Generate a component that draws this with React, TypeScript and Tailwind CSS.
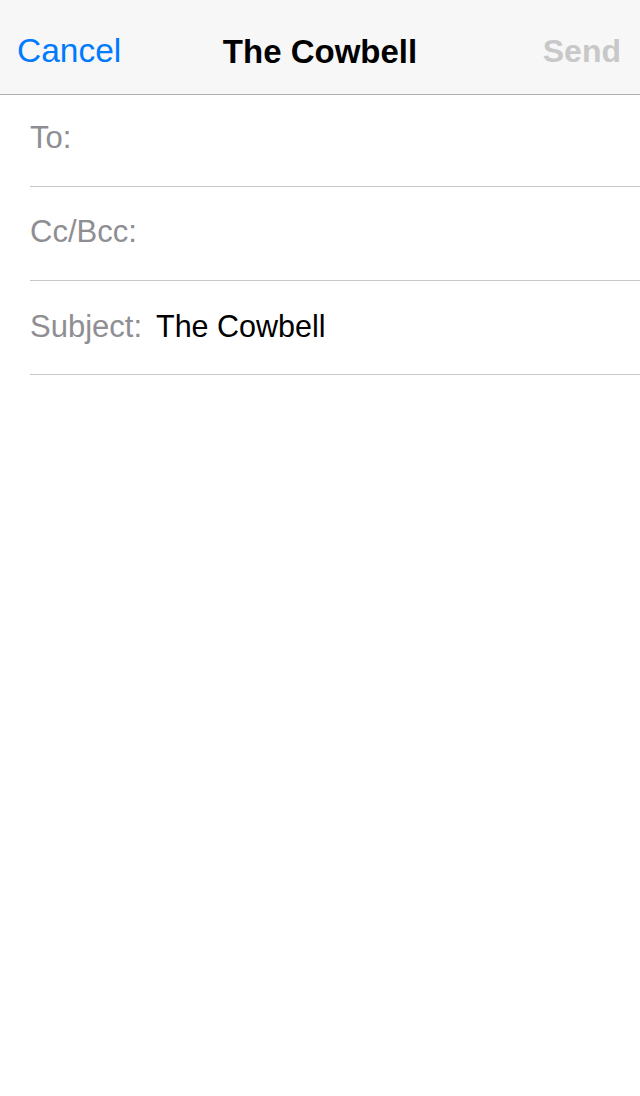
import React from "react";

const font = { fontFamily: '"Liberation Sans", Arial, Helvetica, sans-serif' };

function Row({ label, value, h }: { label: string; value?: string; h: string }) {
  return (
    <div className={`ml-[30px] flex items-center border-b border-[#c8c7cc] ${h}`}>
      <span className="text-[31px] text-[#8e8e93] leading-none">{label}</span>
      {value && <span className="ml-[14px] text-[30.5px] text-black leading-none">{value}</span>}
    </div>
  );
}

export default function App() {
  return (
    <div className="w-[640px] h-[1096px] bg-white" style={font}>
      <div className="h-[95px] bg-[#f7f7f7] border-b border-[#b2b2b2] grid grid-cols-[1fr_auto_1fr] items-center pt-[8px]">
        <span className="pl-[17px] text-[33.5px] text-[#007aff] leading-none">Cancel</span>
        <span className="text-[33px] font-bold text-black leading-none">The Cowbell</span>
        <span className="justify-self-end pr-[19px] text-[32px] font-bold text-[#c8c8c8] leading-none">Send</span>
      </div>
      <Row label="To:" h="h-[92px] pb-[7px]" />
      <Row label="Cc/Bcc:" h="h-[94px] pb-[4px]" />
      <Row label="Subject:" value="The Cowbell" h="h-[94px] pb-[3px]" />
    </div>
  );
}
